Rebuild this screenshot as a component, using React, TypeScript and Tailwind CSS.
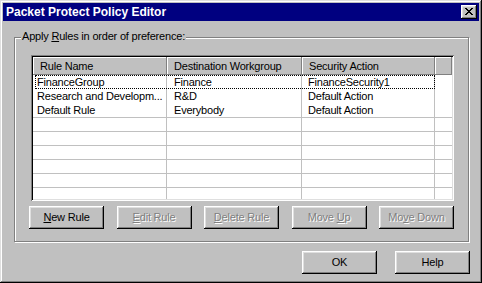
import React from "react";

type Row = { name: string; dest: string; action: string };

const rows: Row[] = [
  { name: "FinanceGroup", dest: "Finance", action: "FinanceSecurity1" },
  { name: "Research and Developm...", dest: "R&D", action: "Default Action" },
  { name: "Default Rule", dest: "Everybody", action: "Default Action" },
];

const raised =
  "shadow-[inset_-1px_-1px_#000,inset_1px_1px_#fff,inset_-2px_-2px_#808080,inset_2px_2px_#dfdfdf]";

const cols = ["w-[134px]", "w-[135px]", "w-[133px]"];

const WinButton: React.FC<{
  children: React.ReactNode;
  disabled?: boolean;
}> = ({ children, disabled }) => (
  <button
    type="button"
    className={`w-[75px] h-[23px] bg-[#c0c0c0] ${raised} flex items-center justify-center leading-[13px] tracking-[-0.2px] ${
      disabled ? "text-[#808080] [text-shadow:1px_1px_0_#fff]" : "text-black"
    }`}
  >
    <span>{children}</span>
  </button>
);

const CloseGlyph = () => {
  const px = [
    [0, 0], [1, 0], [6, 0], [7, 0],
    [1, 1], [2, 1], [5, 1], [6, 1],
    [2, 2], [3, 2], [4, 2], [5, 2],
    [3, 3], [4, 3],
    [2, 4], [3, 4], [4, 4], [5, 4],
    [1, 5], [2, 5], [5, 5], [6, 5],
    [0, 6], [1, 6], [6, 6], [7, 6],
  ];
  return (
    <svg width="8" height="7" viewBox="0 0 8 7" shapeRendering="crispEdges">
      {px.map(([x, y]) => (
        <rect key={`${x}-${y}`} x={x} y={y} width="1" height="1" fill="#000" />
      ))}
    </svg>
  );
};

export default function App() {
  return (
    <div className="w-[482px] h-[283px] bg-[#c0c0c0] p-[3px] flex flex-col shadow-[inset_-1px_-1px_#000,inset_1px_1px_#dfdfdf,inset_-2px_-2px_#808080,inset_2px_2px_#fff] font-['Liberation_Sans',Arial,sans-serif] text-[11px] text-black select-none">
      {/* title bar */}
      <div className="h-[18px] bg-[#000080] flex items-center justify-between pl-[3px] pr-[2px]">
        <span className="text-white font-bold text-[12px] leading-[18px]">
          Packet Protect Policy Editor
        </span>
        <button
          type="button"
          className={`w-[16px] h-[14px] bg-[#c0c0c0] ${raised} flex pl-[4px] pt-[3px]`}
        >
          <CloseGlyph />
        </button>
      </div>

      <div className="flex flex-col pl-[11px] pr-[10px] pt-[16px]">
        {/* group box */}
        <div className="relative border border-[#808080] shadow-[inset_1px_1px_#fff,1px_1px_#fff] pl-[16px] pr-[14px] pt-[17px] pb-[12px]">
          <span className="absolute left-[6px] top-[-8px] px-[1px] bg-[#c0c0c0] leading-[13px] tracking-[-0.2px]">
            Apply <u>R</u>ules in order of preference:
          </span>

          {/* list view */}
          <div className="h-[146px] bg-white p-[2px] shadow-[inset_1px_1px_#808080,inset_-1px_-1px_#fff,inset_2px_2px_#000,inset_-2px_-2px_#dfdfdf]">
            <div className="h-full overflow-hidden flex flex-col">
              <div className="flex h-[18px] shrink-0 bg-[#c0c0c0]">
                {["Rule Name", "Destination Workgroup", "Security Action"].map(
                  (h, i) => (
                    <div
                      key={h}
                      className={`${cols[i]} shrink-0 pl-[7px] leading-[18px] tracking-[-0.2px] shadow-[inset_-1px_-1px_#808080,inset_1px_1px_#fff]`}
                    >
                      {h}
                    </div>
                  )
                )}
                <div className="flex-1 shadow-[inset_-1px_-1px_#808080,inset_1px_1px_#fff]" />
              </div>

              {rows.map((r, idx) => (
                <div key={r.name} className="relative flex h-[14px] shrink-0">
                  <div className={`${cols[0]} shrink-0 border-r border-[#c0c0c0] pl-[4px] pt-[1px] leading-[13px] tracking-[-0.2px] whitespace-nowrap overflow-hidden`}>
                    {r.name}
                  </div>
                  <div className={`${cols[1]} shrink-0 border-r border-[#c0c0c0] pl-[7px] pt-[1px] leading-[13px] tracking-[-0.2px]`}>
                    {r.dest}
                  </div>
                  <div className={`${cols[2]} shrink-0 border-r border-[#c0c0c0] pl-[6px] pt-[1px] leading-[13px] tracking-[-0.2px]`}>
                    {r.action}
                  </div>
                  <div className="flex-1" />
                  {idx === 0 && (
                    <div className="absolute left-[2px] top-0 w-[400px] h-[14px] border border-dotted border-black" />
                  )}
                </div>
              ))}

              {Array.from({ length: 6 }).map((_, i) => (
                <div key={i} className="flex h-[14px] shrink-0 border-t border-[#c0c0c0]">
                  <div className={`${cols[0]} shrink-0 border-r border-[#c0c0c0]`} />
                  <div className={`${cols[1]} shrink-0 border-r border-[#c0c0c0]`} />
                  <div className={`${cols[2]} shrink-0 border-r border-[#c0c0c0]`} />
                  <div className="flex-1" />
                </div>
              ))}
            </div>
          </div>

          <div className="mt-[5px] -ml-[2px] w-[425px] flex justify-between">
            <WinButton>
              <u>N</u>ew Rule
            </WinButton>
            <WinButton disabled>
              <u>E</u>dit Rule
            </WinButton>
            <WinButton disabled>
              <u>D</u>elete Rule
            </WinButton>
            <WinButton disabled>
              Move <u>U</u>p
            </WinButton>
            <WinButton disabled>
              Mo<u>v</u>e Down
            </WinButton>
          </div>
        </div>

        <div className="mt-[9px] -mr-[1px] flex justify-end gap-[18px]">
          <WinButton>OK</WinButton>
          <WinButton>Help</WinButton>
        </div>
      </div>
    </div>
  );
}
